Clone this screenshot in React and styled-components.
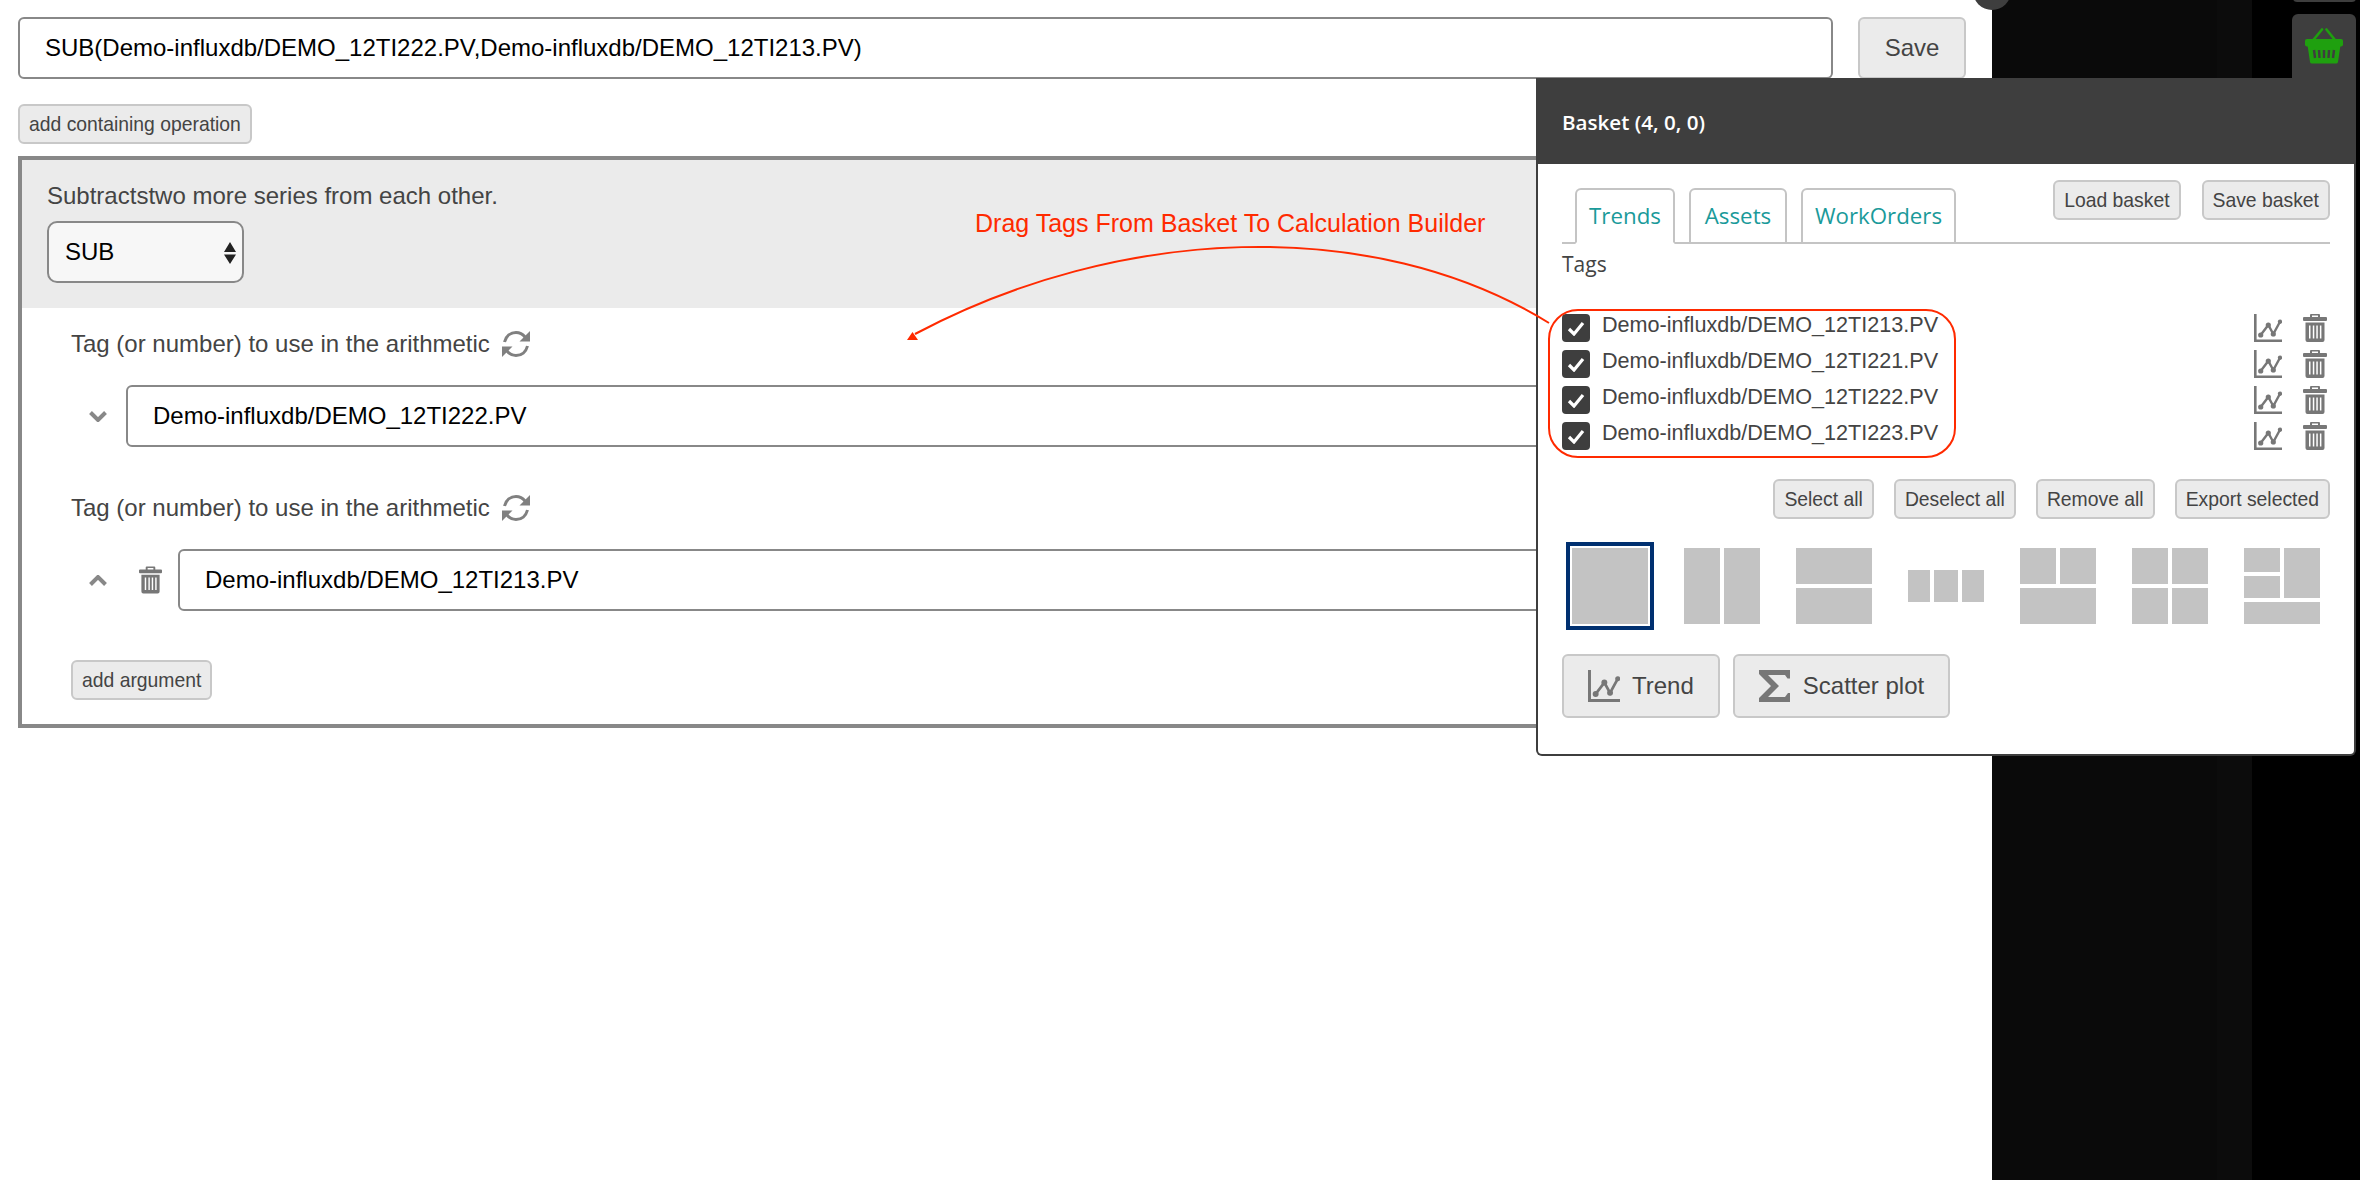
import React from 'react';
import styled, { createGlobalStyle } from 'styled-components';

const GlobalStyle = createGlobalStyle`
  html, body {
    margin: 0;
    background: #000;
    font-family: "Liberation Sans", Arial, sans-serif;
  }
`;

const Page = styled.div`
  position: relative;
  display: flex;
  width: 2360px;
  height: 1180px;
  overflow: hidden;
`;

const Main = styled.div`
  width: 1992px;
  box-sizing: border-box;
  padding: 17px 26px 0 18px;
  background: #fff;
`;

const Side = styled.div`
  flex: 1;
  background: linear-gradient(to right, #0a0a0a 225px, #0c0c0c 225px, #0c0c0c 260px, #000 260px);
`;

const TopRow = styled.div`
  display: flex;
  gap: 25px;
`;

const Field = styled.div`
  flex: 1;
  box-sizing: border-box;
  height: 62px;
  display: flex;
  align-items: center;
  padding-left: ${(p) => p.$indent || 25}px;
  background: #fff;
  border: 2px solid #888;
  border-radius: 6px;
  color: #000;
  font-size: 24px;
`;

const Btn = styled.button`
  box-sizing: border-box;
  display: inline-flex;
  align-items: center;
  justify-content: center;
  gap: 12px;
  height: ${(p) => p.$h || 40}px;
  width: ${(p) => (p.$w ? `${p.$w}px` : 'auto')};
  padding: 0 ${(p) => p.$pad ?? 9}px;
  background: #ebebeb;
  border: 2px solid #c8c8c8;
  border-radius: 6px;
  color: #444;
  font-family: "Liberation Sans", Arial, sans-serif;
  font-size: ${(p) => p.$size || 19.35}px;
`;

const AddOp = styled(Btn)`
  display: flex;
  margin-top: 25px;
`;

const Builder = styled.div`
  box-sizing: border-box;
  height: 572px;
  margin-top: 12px;
  border: 4px solid #888;
`;

const BuilderHead = styled.div`
  height: 148px;
  box-sizing: border-box;
  padding: 22px 25px 0;
  background: #ebebeb;
`;

const Description = styled.div`
  color: #444;
  font-size: 24px;
  line-height: 28px;
`;

const FakeSelect = styled.div`
  position: relative;
  box-sizing: border-box;
  width: 197px;
  height: 62px;
  margin-top: 11px;
  padding-left: 16px;
  display: flex;
  align-items: center;
  background: #f7f7f7;
  border: 2px solid #888;
  border-radius: 10px;
  color: #000;
  font-size: 24px;
`;

const SelectArrows = styled.svg`
  position: absolute;
  right: 6px;
  top: 19px;
`;

const Args = styled.div`
  padding: 22px 49px 0;
`;

const ArgLabel = styled.div`
  display: flex;
  align-items: center;
  gap: 12px;
  margin-top: ${(p) => p.$top || 0}px;
  color: #444;
  font-size: 24px;
  line-height: 28px;
`;

const ArgRow = styled.div`
  display: flex;
  align-items: center;
  margin-top: 27px;
  padding-left: 18px;
`;

const ChevronBox = styled.svg`
  width: 18px;
  height: 11px;
  margin-right: ${(p) => p.$gap}px;
  flex-shrink: 0;
  fill: none;
  stroke: #888;
  stroke-width: 4;
`;

const RowTrash = styled.svg`
  width: 23px;
  height: 28px;
  margin-right: 16px;
  flex-shrink: 0;
  fill: #777;
`;

const AddArg = styled(Btn)`
  display: flex;
  margin-top: 49px;
`;

const Annotation = styled.div`
  position: absolute;
  left: 975px;
  top: 209px;
  color: #ff2a00;
  font-size: 25px;
  line-height: 28px;
  white-space: nowrap;
  z-index: 3;
`;

const ArrowLayer = styled.svg`
  position: absolute;
  left: 0;
  top: 0;
  z-index: 3;
  pointer-events: none;
`;

const DotOne = styled.div`
  position: absolute;
  left: 1973px;
  top: -28px;
  width: 38px;
  height: 38px;
  border-radius: 50%;
  background: #3e3e3e;
`;

const SideSliver = styled.div`
  position: absolute;
  left: 2293px;
  top: -6px;
  width: 63px;
  height: 8px;
  border-radius: 4px;
  background: #3e3e3e;
`;

const BasketTab = styled.div`
  position: absolute;
  left: 2292px;
  top: 14px;
  width: 64px;
  height: 70px;
  box-sizing: border-box;
  padding: 14px 0 0 13px;
  border-radius: 6px 6px 0 0;
  background: #3e3e3e;
`;

const Panel = styled.div`
  position: absolute;
  left: 1536px;
  top: 78px;
  width: 820px;
  height: 678px;
  box-sizing: border-box;
  background: #fff;
  border: 2px solid #3e3e3e;
  border-top: 0;
  border-radius: 0 0 6px 6px;
  z-index: 2;
`;

const PanelHead = styled.div`
  height: 86px;
  box-sizing: border-box;
  display: flex;
  align-items: center;
  padding: 2px 0 0 24px;
  background: #3e3e3e;
  color: #fff;
  font-family: "Open Sans", sans-serif;
  font-size: 20.6px;
  font-weight: 600;
`;

const PanelBody = styled.div`
  padding: 16px 24px 0;
`;

const TabBar = styled.div`
  display: flex;
  justify-content: space-between;
  height: 62px;
  box-sizing: content-box;
  border-bottom: 2px solid #c4c4c4;
`;

const Tabs = styled.div`
  display: flex;
  gap: 14px;
  align-self: flex-end;
  margin: 0 0 -2px 13px;
`;

const Tab = styled.div`
  box-sizing: border-box;
  width: ${(p) => p.$w}px;
  height: 56px;
  display: flex;
  align-items: center;
  justify-content: center;
  padding-bottom: 2px;
  border: 2px solid #c4c4c4;
  border-bottom: ${(p) => (p.$active ? '2px solid #fff' : '2px solid #c4c4c4')};
  border-radius: 6px 6px 0 0;
  color: #1a9a9a;
  font-family: "Open Sans", sans-serif;
  font-size: 22.3px;
`;

const BasketActions = styled.div`
  display: flex;
  gap: 21px;
  align-items: flex-start;
`;

const TagsLabel = styled.div`
  margin-top: 5px;
  color: #444;
  font-family: "Open Sans", sans-serif;
  font-size: 21px;
  line-height: 30px;
`;

const TagList = styled.div`
  position: relative;
  display: flex;
  flex-direction: column;
  gap: 8px;
  margin-top: 35px;
  padding-right: 3px;
`;

const Highlight = styled.div`
  position: absolute;
  left: -14px;
  top: -5px;
  width: 408px;
  height: 149px;
  box-sizing: border-box;
  border: 2px solid #ff2a00;
  border-radius: 30px;
  pointer-events: none;
`;

const TagRow = styled.div`
  display: flex;
  align-items: center;
  height: 28px;
`;

const Check = styled.div`
  width: 28px;
  height: 28px;
  display: flex;
  align-items: center;
  justify-content: center;
  border-radius: 4px;
  background: #3e3e3e;
`;

const TagName = styled.span`
  flex: 1;
  margin: -6px 0 0 12px;
  color: #444;
  font-size: 21.6px;
`;

const TagIcons = styled.div`
  display: flex;
  gap: 21px;
`;

const IconSvg = styled.svg`
  fill: ${(p) => p.$color || '#777'};
  flex-shrink: 0;
`;

const SelectionActions = styled.div`
  display: flex;
  justify-content: flex-end;
  gap: 20px;
  margin-top: 29px;
`;

const LayoutRow = styled.div`
  display: flex;
  align-items: center;
  gap: 36px;
  height: 76px;
  margin-top: 29px;
  padding-left: 10px;
`;

const LayoutTile = styled.div`
  display: grid;
  width: 76px;
  height: ${(p) => p.$h || 76}px;
  gap: ${(p) => p.$gap || 4}px;
  grid-template-columns: ${(p) => p.$cols || '1fr'};
  grid-template-rows: ${(p) => p.$rows || '1fr'};
  box-shadow: ${(p) => (p.$selected ? '0 0 0 2px #fff, 0 0 0 6px #003070' : 'none')};
`;

const Cell = styled.div`
  background: #c3c3c3;
  grid-column: ${(p) => p.$col || 'auto'};
  grid-row: ${(p) => p.$row || 'auto'};
`;

const ChartActions = styled.div`
  display: flex;
  gap: 13px;
  margin-top: 30px;
`;

const ChartIcon = ({ size = 28 }) => (
  <IconSvg viewBox="0 0 28 28" width={size} height={size}>
    <path d="M0 0h2.600v25.400H28V28H0z" />
    <path d="M6.700 21 14.300 11l5 9L26 7.700" fill="none" stroke="#777" strokeWidth="2.400" />
    <circle cx="6.700" cy="21" r="2.600" />
    <circle cx="14.300" cy="11" r="2.600" />
    <circle cx="19.300" cy="20" r="2.600" />
    <circle cx="26" cy="7.700" r="2.200" />
  </IconSvg>
);

const trashPath =
  'M8 0h8a1 1 0 0 1 1 1v2h6a1 1 0 0 1 1 1v2a1 1 0 0 1-1 1H1a1 1 0 0 1-1-1V4a1 1 0 0 1 1-1h6V1a1 1 0 0 1 1-1zm1 1.600V3h6V1.600zM2.500 8.500h19V26a2 2 0 0 1-2 2h-15a2 2 0 0 1-2-2zm3.500 3v13h1.500v-13zm3.800 0v13h1.500v-13zm3.500 0v13h1.500v-13zm3.600 0v13h1.500v-13z';

const TrashIcon = () => (
  <IconSvg viewBox="0 0 24 28" width="24" height="28">
    <path d={trashPath} fillRule="evenodd" />
  </IconSvg>
);

const RefreshIcon = () => (
  <svg width="28" height="28" viewBox="0 0 28 28" fill="none" stroke="#808080" strokeWidth="3">
    <path d="M2.500 12C4 6 8.500 2.500 14 2.500c3.800 0 6.800 1.700 9 4.500" />
    <path d="M25.500 16C24 22 19.500 25.500 14 25.500c-3.800 0-6.800-1.700-9-4.500" />
    <path d="M28 1v10.500h-10.500z" fill="#808080" stroke="none" />
    <path d="M0 27v-10.500h10.500z" fill="#808080" stroke="none" />
  </svg>
);

const BasketIcon = () => (
  <svg width="38" height="36" viewBox="0 0 38 36">
    <path d="M8.300 12 17 1.500M30 12 21.500 1.500" stroke="#1fa00f" strokeWidth="2.600" strokeLinecap="round" fill="none" />
    <rect x="0" y="11" width="38" height="7.600" rx="2" fill="#1fa00f" />
    <path d="M2.500 17h33l-2.500 17a2 2 0 0 1-2 1.500H7a2 2 0 0 1-2-1.500z" fill="#1fa00f" />
    <path d="M9 22l1 8M14 22l.500 8M19 22v8M24 22l-.500 8M29 22l-1 8" stroke="#3e3e3e" strokeWidth="2.400" />
  </svg>
);

const SigmaIcon = () => (
  <IconSvg viewBox="0 0 32 32" width="32" height="32">
    <path d="M0 0h31v8.500h-2.500L26 5H9l11 11L9 27h17l3-4h2v9H0v-4l12-12L0 4z" />
  </IconSvg>
);

const tags = [
  'Demo-influxdb/DEMO_12TI213.PV',
  'Demo-influxdb/DEMO_12TI221.PV',
  'Demo-influxdb/DEMO_12TI222.PV',
  'Demo-influxdb/DEMO_12TI223.PV',
];

export default function App() {
  return (
    <Page>
      <GlobalStyle />
      <Main>
        <TopRow>
          <Field>SUB(Demo-influxdb/DEMO_12TI222.PV,Demo-influxdb/DEMO_12TI213.PV)</Field>
          <Btn $w={108} $h={62} $size={24}>Save</Btn>
        </TopRow>
        <AddOp>add containing operation</AddOp>
        <Builder>
          <BuilderHead>
            <Description>Subtractstwo more series from each other.</Description>
            <FakeSelect>
              SUB
              <SelectArrows width="12" height="22" viewBox="0 0 12 22">
                <path d="M6 0l6 10H0zM6 22l6-9.500H0z" fill="#222" />
              </SelectArrows>
            </FakeSelect>
          </BuilderHead>
          <Args>
            <ArgLabel>Tag (or number) to use in the arithmetic <RefreshIcon /></ArgLabel>
            <ArgRow>
              <ChevronBox $gap={19} viewBox="0 0 18 11"><path d="M1.500 1.500 9 9l7.500-7.500" /></ChevronBox>
              <Field>Demo-influxdb/DEMO_12TI222.PV</Field>
            </ArgRow>
            <ArgLabel $top={47}>Tag (or number) to use in the arithmetic <RefreshIcon /></ArgLabel>
            <ArgRow>
              <ChevronBox $gap={32} viewBox="0 0 18 11"><path d="M1.500 9.500 9 2l7.500 7.500" /></ChevronBox>
              <RowTrash viewBox="0 0 24 28"><path d={trashPath} fillRule="evenodd" /></RowTrash>
              <Field>Demo-influxdb/DEMO_12TI213.PV</Field>
            </ArgRow>
            <AddArg>add argument</AddArg>
          </Args>
        </Builder>
      </Main>
      <Side />

      <DotOne />
      <SideSliver />
      <BasketTab><BasketIcon /></BasketTab>

      <Panel>
        <PanelHead>Basket (4, 0, 0)</PanelHead>
        <PanelBody>
          <TabBar>
            <Tabs>
              <Tab $active $w={100}>Trends</Tab>
              <Tab $w={98}>Assets</Tab>
              <Tab $w={155}>WorkOrders</Tab>
            </Tabs>
            <BasketActions>
              <Btn>Load basket</Btn>
              <Btn>Save basket</Btn>
            </BasketActions>
          </TabBar>
          <TagsLabel>Tags</TagsLabel>
          <TagList>
            {tags.map((tag) => (
              <TagRow key={tag}>
                <Check>
                  <svg width="18" height="16" viewBox="0 0 18 16">
                    <path d="M2 9l5 5L16 3" fill="none" stroke="#fff" strokeWidth="3.200" />
                  </svg>
                </Check>
                <TagName>{tag}</TagName>
                <TagIcons>
                  <ChartIcon />
                  <TrashIcon />
                </TagIcons>
              </TagRow>
            ))}
            <Highlight />
          </TagList>
          <SelectionActions>
            <Btn>Select all</Btn>
            <Btn>Deselect all</Btn>
            <Btn>Remove all</Btn>
            <Btn>Export selected</Btn>
          </SelectionActions>
          <LayoutRow>
            <LayoutTile $selected><Cell /></LayoutTile>
            <LayoutTile $cols="1fr 1fr"><Cell /><Cell /></LayoutTile>
            <LayoutTile $rows="1fr 1fr"><Cell /><Cell /></LayoutTile>
            <LayoutTile $cols="22px 24px 22px" $h={32}><Cell /><Cell /><Cell /></LayoutTile>
            <LayoutTile $cols="1fr 1fr" $rows="1fr 1fr"><Cell /><Cell /><Cell $col="1 / 3" /></LayoutTile>
            <LayoutTile $cols="1fr 1fr" $rows="1fr 1fr"><Cell /><Cell /><Cell /><Cell /></LayoutTile>
            <LayoutTile $cols="1fr 1fr" $rows="24px 22px 22px">
              <Cell /><Cell $row="1 / 3" $col="2" /><Cell /><Cell $col="1 / 3" />
            </LayoutTile>
          </LayoutRow>
          <ChartActions>
            <Btn $h={64} $size={24} $pad={24}><ChartIcon size={32} />Trend</Btn>
            <Btn $h={64} $size={24} $pad={24}><SigmaIcon />Scatter plot</Btn>
          </ChartActions>
        </PanelBody>
      </Panel>

      <Annotation>Drag Tags From Basket To Calculation Builder</Annotation>
      <ArrowLayer width="2360" height="1180" viewBox="0 0 2360 1180">
        <path d="M1549 323C1372 214 1118 226 915 334" fill="none" stroke="#ff2a00" strokeWidth="2" />
        <path d="M907 340l5.500-8 5.500 8z" fill="#ff2a00" />
      </ArrowLayer>
    </Page>
  );
}
